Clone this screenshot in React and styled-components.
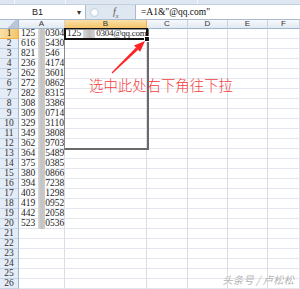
import React from 'react';
import styled, { createGlobalStyle } from 'styled-components';

const GlobalStyle = createGlobalStyle`
  html, body { margin: 0; padding: 0; background: #fff; }
  body { width: 300px; height: 289px; overflow: hidden; }
`;

const columns = ['A', 'B', 'C', 'D', 'E', 'F'];

// QQ numbers, middle digits hidden
const qq = [
    ['125', '0304'], ['616', '5430'], ['821', '546'], ['236', '4174'], ['262', '3601'],
    ['272', '0862'], ['282', '8315'], ['308', '3386'], ['309', '0714'], ['329', '3110'],
    ['349', '3808'], ['362', '9703'], ['364', '5489'], ['375', '0385'], ['380', '0866'],
    ['394', '7238'], ['403', '1298'], ['419', '0952'], ['442', '2058'], ['523', '0536'],
];

const ROWS = 26;

const App = () => {
    const rows = [];
    for (let i = 1; i <= ROWS; i++) {
        const v = qq[i - 1];
        rows.push(
            <React.Fragment key={i}>
                <RowHead active={i === 1}>{i}</RowHead>
                <Cell>
                    {v && (
                        <>
                            <span>{v[0]}</span>
                            <Hidden />
                            <span>{v[1]}</span>
                        </>
                    )}
                </Cell>
                <Cell>
                    {i === 1 && (
                        <>
                            <span>125</span>
                            <Blur />
                            <Email>0304@qq.com</Email>
                        </>
                    )}
                </Cell>
                <Cell />
                <Cell />
                <Cell />
                <Cell />
            </React.Fragment>
        );
    }

    return (
        <Window>
            <GlobalStyle />
            <RibbonEdge>
                <span />
                <span />
                <span />
            </RibbonEdge>
            <FormulaBar>
                <NameBox>
                    <span>B1</span>
                    <Caret>▾</Caret>
                </NameBox>
                <Grip />
                <Fx>f<sub>x</sub></Fx>
                <Formula>=A1&amp;"@qq.com"</Formula>
            </FormulaBar>
            <Sheet>
                <Corner />
                {columns.map((c) => (
                    <ColHead key={c} active={c === 'B'}>{c}</ColHead>
                ))}
                {rows}
            </Sheet>

            <Redact />
            <FillRange />
            <ActiveCell>
                <Handle />
            </ActiveCell>
            <Arrow width="300" height="289" viewBox="0 0 300 289">
                <polygon points="111.6,72.6 112.4,73.4 138.2,49.8 136.0,47.6" fill="#f22" />
                <polygon points="145,41 140.2,51.8 134.0,45.4" fill="#f22" />
            </Arrow>
            <Note>选中此处右下角往下拉</Note>
            <Watermark>头条号 / 卢松松</Watermark>
        </Window>
    );
};

const Window = styled.div`
    position: relative;
    width: 300px;
    height: 289px;
    overflow: hidden;
    display: flex;
    flex-direction: column;
    background: #fff;
    font-family: 'Liberation Serif', serif;
`;

const RibbonEdge = styled.div`
    height: 5px;
    background: #dde6f1;
    border-bottom: 1px solid #c2cfdf;
    box-sizing: border-box;
    display: flex;
    & > span {
        width: 1px;
        background: #f4f7fb;
        margin-left: 14px;
    }
    & > span:nth-child(2) {
        margin-left: 50px;
    }
    & > span:nth-child(3) {
        margin-left: 131px;
    }
`;

const FormulaBar = styled.div`
    height: 15px;
    display: flex;
    align-items: center;
    background: #dfe7f1;
    border-bottom: 1px solid #a9bad0;
    box-sizing: border-box;
`;

const NameBox = styled.div`
    width: 86px;
    height: 14px;
    display: flex;
    align-items: center;
    background: #fff;
    border-right: 1px solid #a9bad0;
    box-sizing: border-box;
    font-family: 'Liberation Sans', sans-serif;
    font-size: 9px;
    color: #222;
    & > span:first-child {
        flex: 1;
        text-align: center;
        padding-right: 2px;
    }
`;

const Caret = styled.span`
    width: 8px;
    font-size: 8px;
    color: #333;
`;

const Grip = styled.div`
    width: 7px;
    height: 7px;
    margin-left: 4px;
    border-radius: 50%;
    border: 1px solid #c7d2df;
    background: radial-gradient(circle, #fff 30%, #e6ecf4 100%);
`;

const Fx = styled.div`
    width: 22px;
    margin-left: 14px;
    font-family: 'Liberation Serif', serif;
    font-style: italic;
    font-size: 10px;
    color: #555;
    & sub {
        font-size: 6px;
    }
`;

const Formula = styled.div`
    flex: 1;
    height: 14px;
    background: #fff;
    border-left: 1px solid #a9bad0;
    box-sizing: border-box;
    padding-left: 5px;
    font-size: 9.5px;
    line-height: 14px;
    color: #111;
    white-space: nowrap;
`;

const Sheet = styled.div`
    display: grid;
    grid-template-columns: 19px 46px 82px 41px 40px 40px 32px;
    grid-template-rows: 9px;
    grid-auto-rows: 10px;
`;

const Corner = styled.div`
    background: linear-gradient(135deg, transparent 60%, #b9c7d8 61%) #e8eef6;
    border-right: 1px solid #9eb6ce;
    border-bottom: 1px solid #9eb6ce;
    box-sizing: border-box;
`;

const ColHead = styled.div`
    box-sizing: border-box;
    border-right: 1px solid ${(p) => (p.active ? '#f2b24a' : '#c8d3e0')};
    border-bottom: 1px solid ${(p) => (p.active ? '#f2b24a' : '#9eb6ce')};
    background: ${(p) =>
        p.active
            ? 'linear-gradient(#fbe0a6, #f4c56a)'
            : 'linear-gradient(#f7f9fc, #e2e9f2)'};
    font-family: 'Liberation Sans', sans-serif;
    font-size: 8px;
    line-height: 8px;
    color: #333;
    text-align: center;
`;

const RowHead = styled.div`
    box-sizing: border-box;
    border-right: 1px solid ${(p) => (p.active ? '#f2b24a' : '#9eb6ce')};
    border-bottom: 1px solid ${(p) => (p.active ? '#f2b24a' : '#c5d3e3')};
    background: ${(p) =>
        p.active ? 'linear-gradient(90deg, #fbe0a6, #f4c56a)' : '#e4ecf7'};
    font-size: 9.5px;
    line-height: 9px;
    color: #333;
    text-align: center;
`;

const Cell = styled.div`
    box-sizing: border-box;
    border-right: 1px solid #dadde8;
    border-bottom: 1px solid #e3e6ee;
    display: flex;
    align-items: center;
    padding-left: 2px;
    font-size: 9.5px;
    line-height: 9px;
    color: #1a1a1a;
    white-space: nowrap;
    overflow: visible;
`;

const Hidden = styled.span`
    width: 10px;
    flex: none;
`;

const Blur = styled.span`
    width: 12px;
    height: 8px;
    margin: 0 1px 0 2px;
    background: linear-gradient(90deg, #d8d8d8, #bdbdbd 50%, #d4d4d4);
    flex: none;
`;

const Email = styled.span`
    font-size: 9px;
    letter-spacing: -0.25px;
`;

const Redact = styled.div`
    position: absolute;
    left: 38px;
    top: 29px;
    width: 7px;
    height: 200px;
    background: linear-gradient(90deg, #d9d9d9, #c3c3c3 45%, #cbcbcb);
`;

const FillRange = styled.div`
    position: absolute;
    left: 64px;
    top: 29px;
    width: 85px;
    height: 121px;
    box-sizing: border-box;
    border: 1px solid #8a8a8a;
    border-right: 2px solid #6a6a6a;
    border-bottom: 2px solid #6a6a6a;
`;

const ActiveCell = styled.div`
    position: absolute;
    left: 64px;
    top: 28px;
    width: 84px;
    height: 12px;
    box-sizing: border-box;
    border: 2px solid #111;
    border-top-width: 1px;
`;

const Handle = styled.div`
    position: absolute;
    right: -4px;
    bottom: -4px;
    width: 4px;
    height: 4px;
    background: #111;
    border: 1px solid #fff;
`;

const Arrow = styled.svg`
    position: absolute;
    left: 0;
    top: 0;
    pointer-events: none;
`;

const Note = styled.div`
    position: absolute;
    left: 89px;
    top: 76px;
    font-family: 'Noto Sans CJK SC', sans-serif;
    font-weight: 300;
    font-size: 14.4px;
    line-height: 18px;
    color: #f43e3e;
    white-space: nowrap;
`;

const Watermark = styled.div`
    position: absolute;
    right: 6px;
    bottom: 2px;
    font-family: 'Noto Sans CJK SC', sans-serif;
    font-size: 10.5px;
    font-style: italic;
    color: #b4b4b4;
    text-shadow: 0 0 1px #fff;
    white-space: nowrap;
`;

export default App;
